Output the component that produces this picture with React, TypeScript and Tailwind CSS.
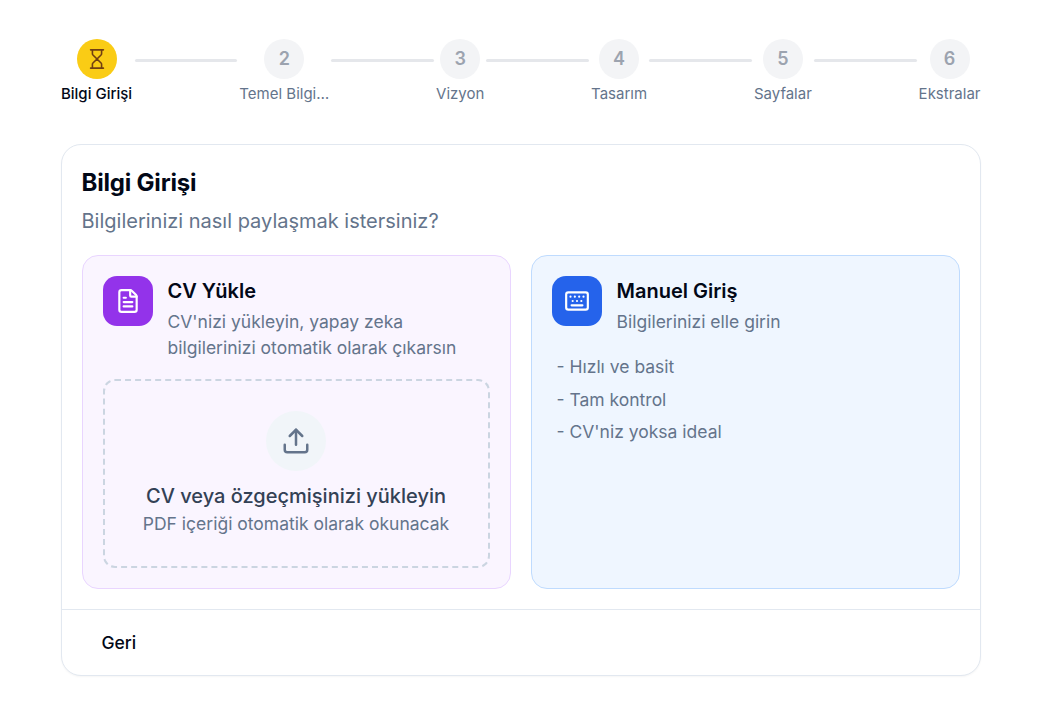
import { FileText, Hourglass, Keyboard, Upload } from "lucide-react";

const steps = ["Temel Bilgi…", "Vizyon", "Tasarım", "Sayfalar", "Ekstralar"];

function Connector() {
  return <div className="mx-0.5 mb-[22px] h-[3px] flex-1 rounded-full bg-[#e5e7eb]" />;
}

export default function App() {
  return (
    <div className="min-h-[714px] bg-white font-['Inter',sans-serif] text-[#020817]">
      <div className="mx-auto w-[920px] pt-[39px]">
        <div className="flex items-center">
          <div className="flex w-[72px] flex-col items-center gap-[5px]">
            <div className="flex h-10 w-10 items-center justify-center rounded-full bg-[#facc15]">
              <Hourglass className="h-[22px] w-[22px] text-[#713f12]" strokeWidth={1.75} />
            </div>
            <span className="whitespace-nowrap text-[15px] font-medium leading-[20px] text-[#020817]">Bilgi Girişi</span>
          </div>
          {steps.map((s, i) => (
            <div key={s} className="contents">
              <Connector />
              <div className={i === 0 ? "flex w-[90px] flex-col items-center gap-[5px]" : "flex flex-col items-center gap-[5px]"}>
                <div className="flex h-10 w-10 items-center justify-center rounded-full bg-[#f3f4f6] text-lg font-semibold text-[#9ca3af]">
                  {i + 2}
                </div>
                <span className="whitespace-nowrap text-[15px] leading-[20px] text-[#64748b]">{s}</span>
              </div>
            </div>
          ))}
        </div>

        <div className="mt-10 rounded-[20px] border border-[#e2e8f0] bg-white shadow-[0_1px_2px_rgba(0,0,0,0.04)]">
          <div className="p-5 pb-0">
            <h1 className="mt-[2px] text-[24px] leading-[32px] font-bold tracking-[-0.2px] text-[#020817]">Bilgi Girişi</h1>
            <p className="mt-2 text-xl leading-[28px] text-[#64748b]">Bilgilerinizi nasıl paylaşmak istersiniz?</p>
            <div className="mt-5 grid grid-cols-2 gap-5">
              <div className="flex h-[334px] flex-col rounded-2xl border border-[#e9d5ff] bg-[#faf5ff] p-5">
                <div className="flex gap-[15px]">
                  <div className="flex h-[50px] w-[50px] shrink-0 items-center justify-center rounded-[14px] bg-[#9333ea]">
                    <FileText className="h-[26px] w-[26px] text-white" />
                  </div>
                  <div>
                    <h2 className="mt-[1px] text-xl leading-[28px] font-semibold text-[#020817]">CV Yükle</h2>
                    <p className="mt-1 text-[17.5px] leading-[26px] text-[#64748b]">
                      CV'nizi yükleyin, yapay zeka bilgilerinizi otomatik olarak çıkarsın
                    </p>
                  </div>
                </div>
                <div className="mt-[18px] flex h-[191px] flex-col items-center rounded-xl border-2 border-dashed border-[#cbd5e1] pt-[30px]">
                  <div className="flex h-[60px] w-[60px] items-center justify-center rounded-full bg-[#f1f5f9]">
                    <Upload className="h-[30px] w-[30px] text-[#64748b]" />
                  </div>
                  <p className="mt-[11px] text-xl leading-[28px] font-medium text-[#334155]">CV veya özgeçmişinizi yükleyin</p>
                  <p className="mt-[2px] text-[17.5px] leading-[24px] text-[#64748b]">PDF içeriği otomatik olarak okunacak</p>
                </div>
              </div>

              <div className="h-[334px] rounded-2xl border border-[#bfdbfe] bg-[#eff6ff] p-5">
                <div className="flex gap-[15px]">
                  <div className="flex h-[50px] w-[50px] shrink-0 items-center justify-center rounded-[14px] bg-[#2563eb]">
                    <Keyboard className="h-[26px] w-[26px] text-white" />
                  </div>
                  <div>
                    <h2 className="mt-[1px] text-xl leading-[28px] font-semibold text-[#020817]">Manuel Giriş</h2>
                    <p className="mt-1 text-[17.5px] leading-[26px] text-[#64748b]">Bilgilerinizi elle girin</p>
                  </div>
                </div>
                <ul className="mt-[16px] pl-[5px] text-[17.5px] text-[#64748b]">
                  <li className="h-[32.5px] leading-[32px]">- Hızlı ve basit</li>
                  <li className="h-[32.5px] leading-[32px]">- Tam kontrol</li>
                  <li className="h-[32.5px] leading-[32px]">- CV'niz yoksa ideal</li>
                </ul>
              </div>
            </div>
          </div>
          <div className="mt-5 flex h-[66px] items-center border-t border-[#e2e8f0] px-5 pt-[2px]">
            <button className="h-10 rounded-md px-5 text-[17.5px] font-[450] text-[#020817]">Geri</button>
          </div>
        </div>
      </div>
    </div>
  );
}
